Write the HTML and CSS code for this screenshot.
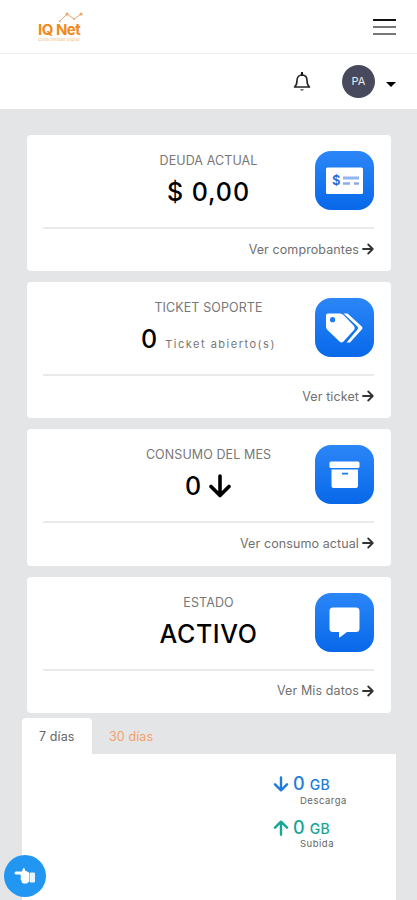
FILE: index.html
```
<!DOCTYPE html>
<html lang="es">
<head>
  <meta charset="UTF-8">
  <meta name="viewport" content="width=device-width, initial-scale=1.0">
  <title>IQ Net</title>
  <link rel="stylesheet" href="styles.css">
</head>
<body>

  <!-- Shared icons -->
  <svg class="sprite">
    <symbol id="arrow" viewBox="0 0 24 24">
      <path d="M2 12H21M12.500 3L21.500 12L12.500 21" fill="none" stroke="currentColor" stroke-width="3.600" stroke-linecap="round" stroke-linejoin="round"/>
    </symbol>
  </svg>

  <header class="topbar">
    <div class="logo">
      <svg class="logo-chart" viewBox="0 0 26 11">
        <path d="M2 9L9 2L16 7L23 2" fill="none" stroke="#f3a468" stroke-width="1"/>
        <g fill="#f0a05f"><circle cx="2" cy="9" r="1"/><circle cx="9" cy="2" r="1.500"/><circle cx="16" cy="7" r="1"/><circle cx="23" cy="2" r="1.500"/></g>
      </svg>
      <span class="logo-name">IQ Net</span>
      <span class="logo-tag">Conectividad Digital</span>
    </div>
    <div class="menu"><i></i><i></i><i></i></div>
  </header>

  <nav class="userbar">
    <svg class="bell" viewBox="0 0 18 20">
      <path d="M1.500 15C4 13 4 11 4 8.500C4 5 6 3 9 3S14 5 14 8.500C14 11 14 13 16.500 15Z" fill="none" stroke="#222" stroke-width="1.600" stroke-linejoin="round"/>
      <path d="M9 1V3" stroke="#111" stroke-width="2.200" stroke-linecap="round"/>
      <path d="M7 17Q9 21 11 17Z" fill="#777"/>
    </svg>
    <span class="avatar">PA</span>
    <span class="caret"></span>
  </nav>

  <main>
    <section class="card">
      <div class="card-body">
        <div class="info">
          <h2>DEUDA ACTUAL</h2>
          <p class="value money">$ 0,00</p>
        </div>
        <svg class="icon" viewBox="0 0 59 59">
          <rect x="11" y="16.500" width="37" height="26.500" rx="1.500" fill="#fff"/>
          <text x="17" y="34" class="dollar">$</text>
          <path d="M28 27H44" stroke="#91b4f4" stroke-width="3"/>
          <path d="M28 32.500H35M39 32.500H44" stroke="#91a8ee" stroke-width="2.600"/>
        </svg>
      </div>
      <a class="more" href="#"><span>Ver comprobantes</span><svg class="go"><use href="#arrow"/></svg></a>
    </section>

    <section class="card">
      <div class="card-body">
        <div class="info">
          <h2>TICKET SOPORTE</h2>
          <p class="value">0 <small>Ticket abierto(s)</small></p>
        </div>
        <svg class="icon" viewBox="0 0 59 59">
          <path d="M28.500 15.500H32.500L46.800 28.500Q48.300 30 46.800 31.500L35 44.500H31.500L42.500 31.500Q44 30 42.500 28.500Z" fill="#fff"/>
          <path fill-rule="evenodd" d="M13 15.500H25Q27 15.500 28.500 17L38.500 27.500Q41 30 38.500 32.500L28.500 43.500Q26.500 45.500 24.500 43.500L12.500 32Q11 30.500 11 28.500V17.500Q11 15.500 13 15.500ZM17.600 19.100A2.600 2.600 0 1 0 17.600 24.300A2.600 2.600 0 1 0 17.600 19.100Z" fill="#fff"/>
        </svg>
      </div>
      <a class="more" href="#"><span>Ver ticket</span><svg class="go"><use href="#arrow"/></svg></a>
    </section>

    <section class="card">
      <div class="card-body">
        <div class="info">
          <h2>CONSUMO DEL MES</h2>
          <p class="value">0<svg class="down"><use href="#arrow"/></svg></p>
        </div>
        <svg class="icon" viewBox="0 0 59 59">
          <rect x="14.500" y="16.500" width="30" height="6.500" rx="1.500" fill="#fff"/>
          <path fill-rule="evenodd" d="M16.500 24.500H43V41Q43 43 41 43H18.500Q16.500 43 16.500 41ZM27 27.800V29.600H33V27.800Z" fill="#fff"/>
        </svg>
      </div>
      <a class="more" href="#"><span>Ver consumo actual</span><svg class="go"><use href="#arrow"/></svg></a>
    </section>

    <section class="card">
      <div class="card-body">
        <div class="info">
          <h2>ESTADO</h2>
          <p class="value activo">ACTIVO</p>
        </div>
        <svg class="icon" viewBox="0 0 59 59">
          <path d="M18 14.500H41Q44.500 14.500 44.500 18V35.500Q44.500 39 41 39H32L25 44.300Q24 45 24 43.500V39H18Q14.500 39 14.500 35.500V18Q14.500 14.500 18 14.500Z" fill="#fff"/>
        </svg>
      </div>
      <a class="more" href="#"><span>Ver Mis datos</span><svg class="go"><use href="#arrow"/></svg></a>
    </section>

    <!-- Traffic tabs -->
    <div class="tabs">
      <a class="tab active" href="#">7 días</a>
      <a class="tab" href="#">30 días</a>
    </div>
    <div class="panel">
      <div class="traffic descarga">
        <p><svg><use href="#arrow"/></svg><b>0</b><span>GB</span></p>
        <small>Descarga</small>
      </div>
      <div class="traffic subida">
        <p><svg><use href="#arrow"/></svg><b>0</b><span>GB</span></p>
        <small>Subida</small>
      </div>
    </div>
  </main>

  <a class="float-btn" href="#">
    <svg viewBox="0 0 22 18">
      <path d="M2 4.500H8L9 1.500Q10 .500 11 2V3.500L15 5.500V14.500L13 16.500H9.500Q7.500 16 7.500 14L6.500 12L7 9L6 7.500H2Q.500 7.300 .500 6T2 4.500Z" fill="#fff"/>
      <rect x="15.500" y="5.500" width="5.500" height="10" rx="1" fill="#e8f4ff"/>
    </svg>
  </a>

</body>
</html>
```
FILE: styles.css
```
* {
  box-sizing: border-box;
}

body {
  margin: 0;
  height: 900px;
  overflow: hidden;
  background-color: #e3e5e7;
  font-family: Inter, "Liberation Sans", sans-serif;
  color: #000;
}

h2, p {
  margin: 0;
}

a {
  text-decoration: none;
}

.sprite {
  display: none;
}

/* Header */
.topbar {
  display: flex;
  justify-content: space-between;
  height: 54px;
  padding: 12px 21px 0 38px;
  background-color: #fff;
  border-bottom: 1px solid #ededee;
}

.logo {
  position: relative;
  display: flex;
  flex-direction: column;
  padding-top: 10px;
  color: #f08a1d;
}

.logo-chart {
  position: absolute;
  top: 0;
  left: 20px;
  width: 26px;
  height: 11px;
}

.logo-name {
  font-size: 15px;
  line-height: 15px;
  font-weight: 700;
  letter-spacing: -0.5px;
}

.logo-tag {
  margin-top: 1px;
  font-size: 4px;
  line-height: 4px;
  letter-spacing: 0.2px;
  color: #f5b27c;
}

.menu {
  display: flex;
  flex-direction: column;
  gap: 5px;
  width: 23px;
  padding-top: 7px;
}

.menu i {
  height: 2px;
  background-color: #777;
}

.menu i:first-child {
  background-color: #111;
}

.userbar {
  display: flex;
  align-items: center;
  justify-content: flex-end;
  height: 55px;
  padding-right: 21px;
  background-color: #fff;
}

.bell {
  width: 18px;
  height: 20px;
  margin-right: 31px;
}

.avatar {
  width: 33px;
  height: 33px;
  margin-right: 11px;
  border-radius: 50%;
  background-color: #464a5c;
  color: #e8e8ee;
  font-size: 11px;
  line-height: 33px;
  text-align: center;
}

.caret {
  margin-top: 5px;
  border: 5px solid transparent;
  border-top-color: #000;
  border-bottom: 0;
}

/* Cards */
main {
  padding: 26px 21px 0 22px;
}

.card {
  height: 136.2px;
  margin: 0 5px 11px;
  padding: 16px 17px 0 16px;
  background-color: #fff;
  border-radius: 4px;
}

.card-body {
  display: grid;
  grid-template-columns: 59px 1fr 59px;
  height: 78px;
  border-bottom: 2px solid #e9eaec;
}

.info {
  grid-column: 2;
  text-align: center;
  white-space: nowrap;
}

.info h2 {
  padding-top: 1px;
  font-size: 12.5px;
  line-height: 18px;
  font-weight: 400;
  letter-spacing: 0.1px;
  color: #777;
}

.value {
  display: flex;
  align-items: baseline;
  justify-content: center;
  font-size: 25px;
  line-height: 30px;
  margin-top: 7px;
  font-weight: 500;
}

.money {
  letter-spacing: 0.9px;
}

.activo {
  letter-spacing: 0.6px;
}

.value small {
  margin-left: 8px;
  font-size: 11px;
  font-weight: 400;
  letter-spacing: 1.5px;
  color: #777;
}

.down {
  width: 24px;
  height: 24px;
  margin-left: 7px;
  align-self: center;
  transform: rotate(90deg);
}

.icon {
  width: 59px;
  height: 59px;
  border-radius: 16px;
  background: linear-gradient(#2b86f7, #0768e9);
}

.dollar {
  font-size: 13px;
  font-weight: 600;
  fill: #2868dc;
}

.more {
  display: flex;
  align-items: center;
  justify-content: flex-end;
  height: 40px;
  font-size: 12.5px;
  letter-spacing: 0.1px;
  color: #707070;
}

.go {
  width: 12px;
  height: 12px;
  margin-left: 3px;
  color: #333;
}

/* Tabs */
.tabs {
  display: flex;
  height: 36px;
  margin-top: -5.5px;
}

.tab {
  width: 70px;
  padding-left: 17px;
  font-size: 12.5px;
  line-height: 37px;
  letter-spacing: 0.1px;
  color: #f4a069;
}

.tab.active {
  background-color: #fff;
  border-radius: 4px 4px 0 0;
  color: #666;
}

.panel {
  height: 160px;
  padding: 19px 0 0 251px;
  background-color: #fff;
}

.traffic {
  height: 44px;
  color: #217bdc;
}

.subida {
  color: #18a594;
}

.traffic p {
  display: flex;
  align-items: baseline;
  height: 22px;
  line-height: 22px;
}

.traffic svg {
  width: 16px;
  height: 16px;
  margin-right: 4px;
  align-self: center;
  transform: rotate(90deg);
}

.subida svg {
  transform: rotate(-90deg);
}

.traffic b {
  font-size: 18px;
  font-weight: 500;
  margin-right: 5px;
}

.traffic span {
  font-size: 14px;
  font-weight: 500;
  letter-spacing: 0.4px;
}

.traffic small {
  display: block;
  padding-left: 27px;
  font-size: 9.5px;
  line-height: 11px;
  letter-spacing: 0.5px;
  color: #666;
}

.subida small {
  margin-top: -1px;
}

/* Floating button */
.float-btn {
  position: fixed;
  left: 4px;
  bottom: 3px;
  display: flex;
  align-items: center;
  justify-content: center;
  width: 42px;
  height: 42px;
  border-radius: 50%;
  background-color: #2196f3;
}

.float-btn svg {
  width: 22px;
  height: 18px;
}
```
